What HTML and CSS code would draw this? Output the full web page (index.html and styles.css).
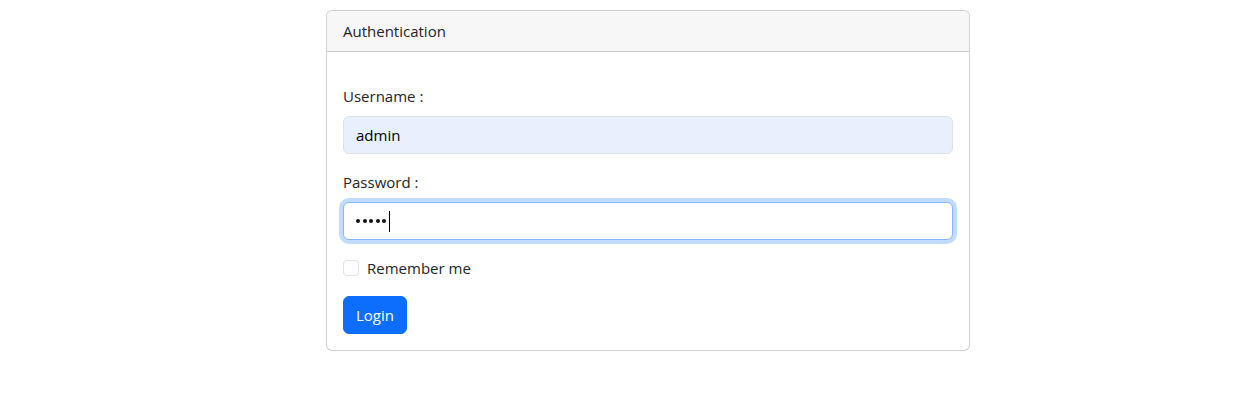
FILE: index.html
```html
<!DOCTYPE html>
<html lang="en">
<head>
<meta charset="utf-8">
<title>Authentication</title>
<link rel="stylesheet" href="styles.css">
</head>
<body>
<div class="page">
  <div class="card">
    <div class="card-header">Authentication</div>
    <div class="card-body">
      <form class="form">
        <div class="group">
          <label class="label" for="username">Username :</label>
          <input class="control autofilled" id="username" type="text" value="admin">
        </div>
        <div class="group">
          <label class="label">Password :</label>
          <div class="control focused password" role="textbox" aria-label="Password">
            <span class="dot"></span><span class="dot"></span><span class="dot"></span><span class="dot"></span><span class="dot"></span><span class="caret"></span>
          </div>
        </div>
        <div class="group check">
          <span class="checkbox"></span>
          <span class="check-label">Remember me</span>
        </div>
        <div class="group">
          <button type="button" class="btn">Login</button>
        </div>
      </form>
    </div>
  </div>
</div>
</body>
</html>
```

FILE: styles.css
```css
* { box-sizing: border-box; }
html, body { margin: 0; padding: 0; background: #fff; }
body {
  font-family: "Open Sans", "Noto Sans", sans-serif;
  font-size: 15px;
  line-height: 24px;
  color: #212529;
}
.page {
  padding: 10px 0 0 326px;
}
.card {
  width: 644px;
  border: 1px solid rgba(0,0,0,0.175);
  border-radius: 6px;
  background: #fff;
  overflow: hidden;
}
.card-header {
  padding: 8px 16px;
  background: #f7f7f7;
  border-bottom: 1px solid rgba(0,0,0,0.175);
}
.card-body {
  padding: 16px;
}
.form {
  margin-top: 16px;
}
.group {
  margin-bottom: 16px;
}
.group:last-child { margin-bottom: 0; }
.label {
  display: block;
  margin-bottom: 8px;
}
.control {
  display: block;
  width: 100%;
  height: 38px;
  padding: 6px 12px;
  font: inherit;
  color: #000;
  background: #fff;
  border: 1px solid #dee2e6;
  border-radius: 6px;
  outline: none;
}
.autofilled {
  background: #e8f0fe;
}
.focused, .control:focus {
  border-color: #86b7fe;
  box-shadow: 0 0 0 4px rgba(13,110,253,0.25);
}
.password {
  display: flex;
  align-items: center;
  gap: 2.5px;
}
.dot {
  width: 4px;
  height: 4px;
  border-radius: 50%;
  background: #111;
}
.caret {
  width: 1px;
  height: 21px;
  background: #000;
  margin-left: 0;
}
.check {
  display: flex;
  align-items: center;
  gap: 8px;
}
.checkbox {
  width: 16px;
  height: 16px;
  border: 1px solid #dee2e6;
  border-radius: 4px;
  background: #fff;
}
.btn {
  font: inherit;
  color: #fff;
  background: #0d6efd;
  border: 1px solid #0d6efd;
  border-radius: 6px;
  padding: 6px 12px;
  height: 38px;
  cursor: pointer;
}
```
